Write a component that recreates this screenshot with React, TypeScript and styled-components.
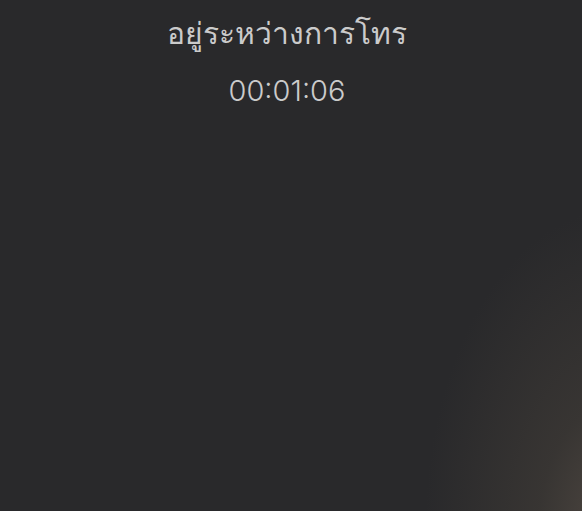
import React from "react";
import styled, { createGlobalStyle } from "styled-components";

const Global = createGlobalStyle`
  html, body { margin: 0; padding: 0; height: 100%; }
  body { background: #29292b; }
  #root { height: 100%; }
`;

const Screen = styled.div`
  width: 582px;
  height: 511px;
  overflow: hidden;
  box-sizing: border-box;
  padding-right: 8px;
  background:
    radial-gradient(ellipse 190px 320px at 615px 530px, rgba(78, 71, 65, 1) 0%, rgba(62, 58, 54, 0.7) 40%, rgba(41, 41, 43, 0) 100%),
    #29292b;
  display: flex;
  flex-direction: column;
  align-items: center;
  font-family: "Noto Sans", "DejaVu Sans", sans-serif;
  color: #cbcbcb;
`;

const Status = styled.div`
  margin-top: 13px;
  font-size: 30px;
  line-height: 40px;
`;

const Timer = styled.div`
  margin-top: 18px;
  font-size: 29px;
  line-height: 40px;
  font-family: "Inter", "Noto Sans", sans-serif;
  font-weight: 300;
`;

export default function App() {
  return (
    <>
      <Global />
      <Screen>
        <Status>อยู่ระหว่างการโทร</Status>
        <Timer>00:01:06</Timer>
      </Screen>
    </>
  );
}
